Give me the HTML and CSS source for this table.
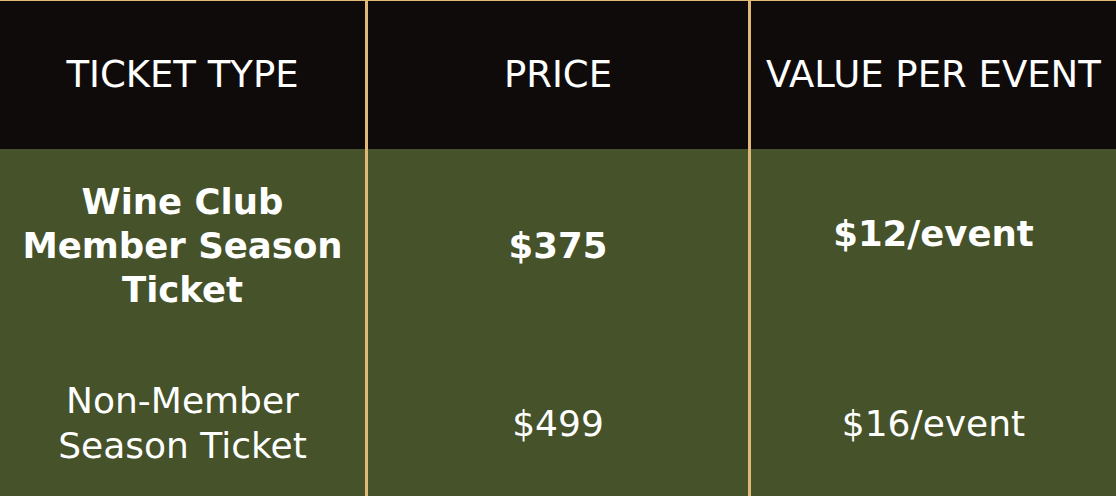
FILE: index.html
```html
<!DOCTYPE html>
<html>
<head>
<meta charset="utf-8">
<link rel="stylesheet" href="styles.css">
</head>
<body>
<div class="table">
  <div class="cell head">TICKET TYPE</div>
  <div class="cell head sep">PRICE</div>
  <div class="cell head sep">VALUE PER EVENT</div>

  <div class="cell row1 bold">Wine Club<br>Member Season<br>Ticket</div>
  <div class="cell row1 bold sep">$375</div>
  <div class="cell row1 bold sep lift">$12/event</div>

  <div class="cell row2">Non-Member<br>Season Ticket</div>
  <div class="cell row2 sep">$499</div>
  <div class="cell row2 sep">$16/event</div>
</div>
</body>
</html>
```
FILE: styles.css
```css
html, body {
  margin: 0;
  padding: 0;
  background: #46522a;
  overflow: hidden;
}
.table {
  width: 1116px;
  display: grid;
  grid-template-columns: 365px 383px 368px;
  grid-template-rows: 148px 194px 160px;
  border-top: 1px solid #e0b878;
  font-family: "DejaVu Sans", Verdana, sans-serif;
  color: #ffffff;
}
.cell {
  box-sizing: border-box;
  display: flex;
  align-items: center;
  justify-content: center;
  text-align: center;
  font-size: 36px;
  line-height: 44px;
}
.sep {
  border-left: 3px solid #e0b878;
}
.head {
  background: #0f0b0b;
  font-size: 37px;
}
.row1, .row2 {
  background: #46522a;
}
.bold {
  font-weight: bold;
  font-size: 35.5px;
}
.lift {
  padding-bottom: 24px;
}
.row2 {
  line-height: 45px;
}
```
